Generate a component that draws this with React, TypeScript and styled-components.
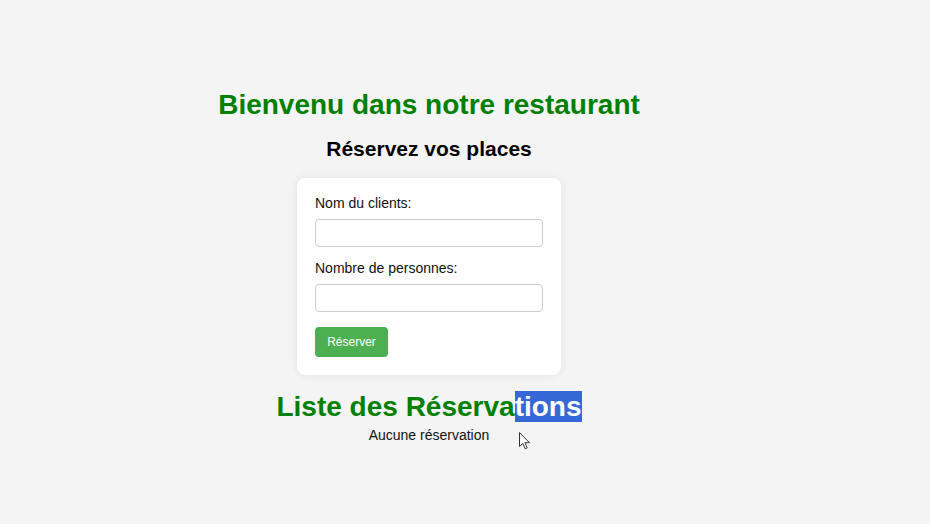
import React from 'react'
import styled, { createGlobalStyle } from 'styled-components'

const GlobalStyle = createGlobalStyle`
	html, body {
		margin: 0;
		padding: 0;
		background: #f4f4f4;
		font-family: "Liberation Sans", Arial, sans-serif;
	}
`

const Page = styled.div`
	position: relative;
	width: 858px;
	height: 524px;
	padding-top: 89px;
	box-sizing: border-box;
	text-align: center;
`

const Title = styled.h1`
	margin: 0;
	font-size: 28px;
	line-height: 32px;
	font-weight: bold;
	color: #008000;
`

const SubTitle = styled.h2`
	margin: 16px 0 0;
	font-size: 21px;
	line-height: 24px;
	font-weight: bold;
	color: #000;
`

const Card = styled.form`
	width: 264px;
	margin: 17px auto 0;
	padding: 17px 18px 18px;
	box-sizing: border-box;
	background: #fff;
	border-radius: 8px;
	box-shadow: 0 0 10px rgba(0, 0, 0, 0.08);
	text-align: left;
`

const Label = styled.label`
	display: block;
	font-size: 14px;
	line-height: 16px;
	color: #111;
	margin-bottom: 8px;
`

const Input = styled.input<{ last?: boolean }>`
	display: block;
	width: 100%;
	height: 28px;
	box-sizing: border-box;
	margin: 0 0 ${p => p.last ? '15px' : '13px'};
	border: 1px solid #ccc;
	border-radius: 4px;
	background: #fff;
	font-family: inherit;
`

const Button = styled.button`
	display: block;
	width: 73px;
	height: 30px;
	border: none;
	border-radius: 4px;
	background: #4caf50;
	color: #fff;
	font-family: inherit;
	font-size: 12px;
	padding: 0;
`

const ListTitle = styled.h2`
	margin: 16px 0 0;
	font-size: 28px;
	line-height: 32px;
	font-weight: bold;
	color: #008000;
`

const Selected = styled.span`
	background: #3567d6;
	color: #fff;
`

const Empty = styled.p`
	margin: 4px 0 0;
	font-size: 14px;
	line-height: 16px;
	color: #111;
`

const Pointer = styled.svg`
	position: absolute;
	left: 519px;
	top: 432px;
`

export default function App() {
	return <>
		<GlobalStyle/>
		<Page>
			<Title>Bienvenu dans notre restaurant</Title>
			<SubTitle>Réservez vos places</SubTitle>
			<Card onSubmit={e => e.preventDefault()}>
				<Label htmlFor="nom">Nom du clients:</Label>
				<Input id="nom" type="text"/>
				<Label htmlFor="personnes">Nombre de personnes:</Label>
				<Input id="personnes" type="number" last/>
				<Button type="submit">Réserver</Button>
			</Card>
			<ListTitle>Liste des Réserva<Selected>tions</Selected></ListTitle>
			<Empty>Aucune réservation</Empty>
			<Pointer width="12" height="18" viewBox="0 0 12 18">
				<path d="M0.5 0.5 L0.5 14.5 L3.8 11.4 L6.2 16.8 L8.2 15.9 L5.9 10.7 L10.5 10.7 Z" fill="#fff" stroke="#333" strokeWidth="1" strokeLinejoin="round"/>
			</Pointer>
		</Page>
	</>
}
